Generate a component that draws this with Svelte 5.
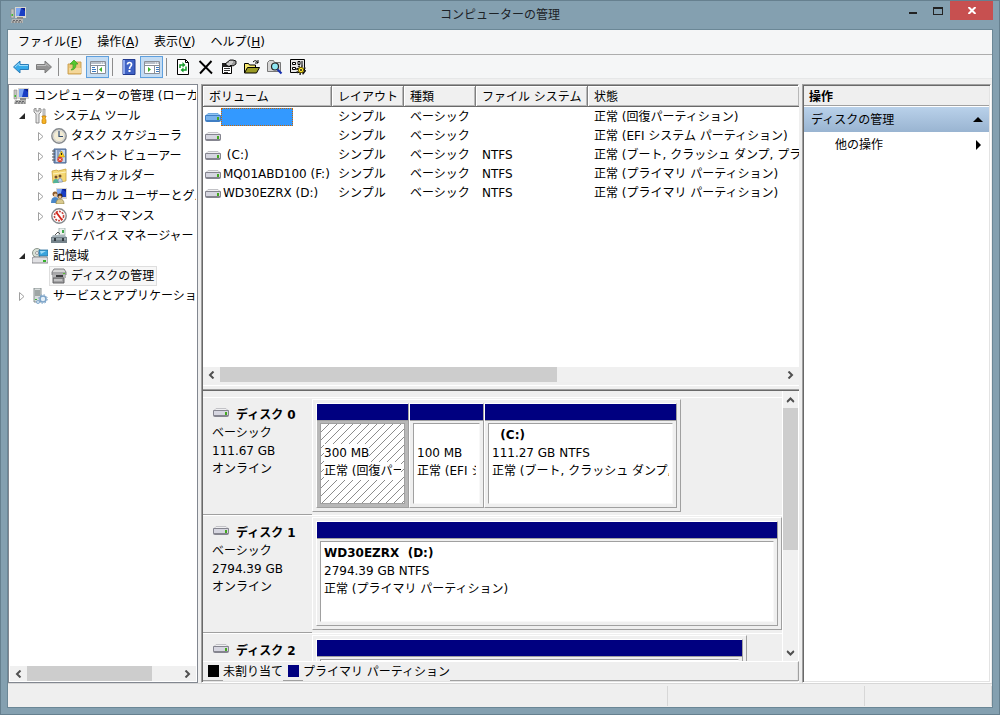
<script lang="ts">
    interface TreeNode {
        label: string;
        icon: string;
        level: number;
        state?: "open" | "closed";
        selected?: boolean;
    }

    interface Partition {
        name?: string;
        size: string;
        status: string;
        width: number;
        selected?: boolean;
    }

    const menus = [
        { label: "ファイル", key: "F" },
        { label: "操作", key: "A" },
        { label: "表示", key: "V" },
        { label: "ヘルプ", key: "H" }
    ];

    const tools = [
        [
            { icon: "back", label: "戻る" },
            { icon: "forward", label: "進む" }
        ],
        [
            { icon: "up", label: "上へ" },
            { icon: "treepane", label: "コンソール ツリー", on: true }
        ],
        [
            { icon: "help", label: "ヘルプ" },
            { icon: "actionpane", label: "操作ウィンドウ", on: true }
        ],
        [
            { icon: "refresh", label: "最新の情報に更新" },
            { icon: "delete", label: "削除" },
            { icon: "props", label: "プロパティ" },
            { icon: "open", label: "開く" },
            { icon: "find", label: "検索" },
            { icon: "settings", label: "設定" }
        ]
    ];

    const tree: TreeNode[] = [
        { label: "コンピューターの管理 (ローカル)", icon: "computer", level: 0 },
        { label: "システム ツール", icon: "tools", level: 1, state: "open" },
        { label: "タスク スケジューラ", icon: "clock", level: 2, state: "closed" },
        { label: "イベント ビューアー", icon: "event", level: 2, state: "closed" },
        { label: "共有フォルダー", icon: "share", level: 2, state: "closed" },
        { label: "ローカル ユーザーとグループ", icon: "users", level: 2, state: "closed" },
        { label: "パフォーマンス", icon: "perf", level: 2, state: "closed" },
        { label: "デバイス マネージャー", icon: "device", level: 2 },
        { label: "記憶域", icon: "storage", level: 1, state: "open" },
        { label: "ディスクの管理", icon: "disks", level: 2, selected: true },
        { label: "サービスとアプリケーション", icon: "services", level: 1, state: "closed" }
    ];

    const volumes = [
        { name: "", fs: "", status: "正常 (回復パーティション)" },
        { name: "", fs: "", status: "正常 (EFI システム パーティション)" },
        { name: " (C:)", fs: "NTFS", status: "正常 (ブート, クラッシュ ダンプ, プライマリ パーティション)" },
        { name: "MQ01ABD100 (F:)", fs: "NTFS", status: "正常 (プライマリ パーティション)" },
        { name: "WD30EZRX (D:)", fs: "NTFS", status: "正常 (プライマリ パーティション)" }
    ];

    const disks: { name: string; size?: string; partitions: Partition[] }[] = [
        {
            name: "ディスク 0",
            size: "111.67 GB",
            partitions: [
                { size: "300 MB", status: "正常 (回復パーティション)", width: 93, selected: true },
                { size: "100 MB", status: "正常 (EFI システム パーティション)", width: 75 },
                { name: "\u00a0 (C:)", size: "111.27 GB NTFS", status: "正常 (ブート, クラッシュ ダンプ, プライマリ パーティション)", width: 193 }
            ]
        },
        {
            name: "ディスク 1",
            size: "2794.39 GB",
            partitions: [
                { name: "WD30EZRX\u00a0 (D:)", size: "2794.39 GB NTFS", status: "正常 (プライマリ パーティション)", width: 462 }
            ]
        },
        {
            name: "ディスク 2",
            partitions: [{ size: "", status: "", width: 427 }]
        }
    ];

    let selectedVolume = $state(0);
</script>

{#snippet screen()}
    <path d="M5 0h11v11H5z" fill="#d9d7cf" />
    <path d="M6 1h9v8H6z" fill="#1a3fc4" />
    <path d="M6 1h5L9 9H6z" fill="#7ea6f2" />
    <path d="M11 1h4v3z" fill="#0b1f90" />
{/snippet}

{#snippet icon(name: string)}
    <svg class="icon" viewBox="0 0 16 16" width="16" height="16" aria-hidden="true">
        {#if name === "computer"}
            {@render screen()}
            <path d="M1 2h3v9H1z" fill="#c4c4c0" stroke="#8b8b88" stroke-width=".6" />
            <path d="M1.500 7h1.500v2h-1.500z" fill="#3fbf30" />
            <path d="M7 10h6v2H7z" fill="#8b8b88" />
            <path d="M2 12h11v4H1z" fill="#b4b4b2" />
            <path d="M3 13.500h9M2 15h10" stroke="#65666a" stroke-dasharray="2 1" />
        {:else if name === "tools"}
            <path d="M2 1v3l2 2v9h3V6l2-2V1L7 0v3H4V0z" fill="#e4e4e4" stroke="#777" stroke-width=".8" />
            <path d="M11 1h2v7h-2z" fill="#ddd" stroke="#888" stroke-width=".7" />
            <path d="M10 8h4v1l-1 1 1 2v3q-2 2-4 0v-3l1-2-1-1z" fill="#f5b324" stroke="#c17d08" stroke-width=".7" />
        {:else if name === "clock"}
            <circle cx="8" cy="8" r="7.200" fill="#f3ecd4" stroke="#85898e" stroke-width="1.400" />
            <circle cx="8" cy="8" r="5.600" fill="none" stroke="#cfd0d2" />
            <path d="M8 3v5.500h4" fill="none" stroke="#314c74" stroke-width="1.200" />
        {:else if name === "event"}
            <path d="M3 1h12v14H3z" fill="#7f9dc4" stroke="#4b6590" />
            <path d="M5 2h9v12H5z" fill="#c8d6ea" />
            <path d="M1 3h3M1 6h3M1 9h3M1 12h3" stroke="#555" />
            <path d="M6 3h4M6 5h2M6 7h2M6 9h2" stroke="#4f6ca0" />
            <path d="M10.500 3l3 6h-6z" fill="#ffd21c" stroke="#b98c00" stroke-width=".6" />
            <path d="M10.500 5v2" stroke="#222" />
            <circle cx="9" cy="11.500" r="2.700" fill="#d83a26" />
            <path d="M8 10.500l2 2m0-2l-2 2" stroke="#fff" />
        {:else if name === "share"}
            <path d="M1 3l5-1 1 1 8-2v12L2 15z" fill="#f4d774" stroke="#c9a33a" stroke-width=".8" />
            <path d="M2 6l13-2" stroke="#fdf2be" />
            <circle cx="5" cy="9" r="1.500" fill="#75502c" />
            <circle cx="9" cy="8" r="1.500" fill="#75502c" />
            <path d="M2 15q0-4 3-4t3 4z" fill="#53b39a" />
            <path d="M7 14q0-4 2-4t2.500 4z" fill="#c7d3e8" stroke="#6f87aa" stroke-width=".6" />
        {:else if name === "users"}
            {@render screen()}
            <circle cx="4" cy="6" r="2.500" fill="#8a5a2b" />
            <circle cx="4.500" cy="7" r="1.600" fill="#f0c79b" />
            <path d="M0 15q0-6 4-6t4 6z" fill="#4a87c8" />
            <circle cx="9" cy="8" r="2.500" fill="#3f2b19" />
            <circle cx="9" cy="9" r="1.600" fill="#e9b989" />
            <path d="M5 16q0-5 4-5t4 5z" fill="#d9c98e" stroke="#85783e" stroke-width=".6" />
        {:else if name === "perf"}
            <circle cx="8" cy="8" r="7.200" fill="#fff" stroke="#85888c" stroke-width="1.400" />
            <circle cx="8" cy="8" r="4.600" fill="none" stroke="#c8473f" stroke-width="1.600" stroke-dasharray="2 1" />
            <path d="M5 4l6 8" stroke="#d3271c" stroke-width="1.800" />
        {:else if name === "device"}
            <path d="M8 0h6v7H8z" fill="#eef3f0" stroke="#9aa" stroke-width=".8" />
            <path d="M11 2h2v3h-2z" fill="#41a94d" />
            <path d="M4 7l3-3 2 2" fill="none" stroke="#555" />
            <path d="M2 7h12l2 3H0z" fill="#a9b6bd" />
            <path d="M0 9h16v6H0z" fill="#75838b" />
            <path d="M1 11h14" stroke="#b9c6cc" />
            <path d="M3 10h2v3H3zM11 10h2v3h-2z" fill="#333c42" />
        {:else if name === "storage"}
            <circle cx="5" cy="5" r="4.500" fill="#d9e2d8" stroke="#8b958c" />
            <circle cx="5" cy="5" r="1.500" fill="#fff" stroke="#9a9a9a" />
            <path d="M7 2h9v6H7z" fill="#3aa4dd" stroke="#2c6f9c" stroke-width=".8" />
            <path d="M8 3h6l-5 3z" fill="#9fdcf8" />
            <path d="M1 9h14l1 2v4H0v-4z" fill="#e0e0e3" stroke="#77777c" stroke-width=".8" />
            <path d="M11 12h3v2h-3z" fill="#35b12a" />
        {:else if name === "disks"}
            <path d="M3 1h10l2 3v3H1V4z" fill="#d6d6d6" stroke="#77777a" stroke-width=".9" />
            <path d="M1 5h14" stroke="#77777a" />
            <path d="M1 7h14v3H1z" fill="#b4b4b6" />
            <path d="M5 7h7v2H5z" fill="#3c3c3e" />
            <path d="M2 10h11v5H2z" fill="#a0a0a2" stroke="#5a5a5c" stroke-width=".9" />
            <path d="M3 12h8" stroke="#e6e6e6" />
            <path d="M12 5h2v1h-2z" fill="#58c22f" />
        {:else if name === "services"}
            <path d="M2 0h7v14H2z" fill="#d7dcdc" stroke="#7d8787" stroke-width=".9" />
            <path d="M3 3h5M3 5h5M3 7h5" stroke="#67716f" />
            <path d="M3 11h2v1H3z" fill="#3daf3a" />
            <circle cx="11" cy="11" r="3" fill="#e4eff8" stroke="#7ba3c8" stroke-width="1.600" />
            <circle cx="11" cy="11" r="4.300" fill="none" stroke="#7ba3c8" stroke-dasharray="1.500 1.900" />
            <circle cx="6" cy="14" r="1.600" fill="#c9dcec" stroke="#7ba3c8" stroke-width=".8" />
        {:else if name === "back"}
            <path d="M.500 8L7 2v3.500h8.500v5H7V14z" fill="#37abea" stroke="#2c7cb8" />
            <path d="M2 8l4-3.500v2h9" fill="none" stroke="#9bdcfb" />
        {:else if name === "forward"}
            <path d="M15.500 8L9 2v3.500H.500v5H9V14z" fill="#939393" stroke="#7c7c7c" />
            <path d="M1 6.500h9v-2l3 3" fill="none" stroke="#c0c0c0" />
        {:else if name === "up"}
            <path d="M1 5h6l1-2h6v12H1z" fill="#eac67a" stroke="#c99b4a" stroke-width=".9" />
            <path d="M2 9h12v5H2z" fill="#f4d79a" />
            <path d="M4 11q3-2 2-6H3l4-4 4 4H9q0 6-5 6z" fill="#55c82e" stroke="#3a9d20" stroke-width=".7" />
        {:else if name === "treepane" || name === "actionpane"}
            <path d="M.500 2.500h15v12H.500z" fill="#fff" stroke="#8a8f98" />
            <path d="M1 3h14v2H1z" fill="#b9c0ca" />
            <path d="M1 6.500h14" stroke="#8a8f98" />
            <path d="M11 4h1M13 4h1" stroke="#fff" />
            {#if name === "treepane"}
                <path d="M7.500 7v7" stroke="#8a8f98" />
                <path d="M2 8.500h3M2 10.500h4M2 12.500h4" stroke="#3a78c0" />
                <path d="M12 8v5L9 10.500z" fill="#3cb128" />
            {:else}
                <path d="M10.500 7v7" stroke="#8a8f98" />
                <path d="M12 8.500h3M12 10.500h3M12 12.500h3" stroke="#3a78c0" />
                <path d="M4 8v5l3-2.500z" fill="#3cb128" />
            {/if}
        {:else if name === "help"}
            <path d="M2 .500h12v15H2z" fill="#3f62c4" stroke="#20398f" />
            <path d="M2 1h2v14H2z" fill="#8ea8ec" />
            <path d="M6.500 5.500q0-2 2-2t2 2q0 1-1 2t-1 2.500" fill="none" stroke="#fff" stroke-width="1.700" />
            <path d="M7.500 11h2v2h-2z" fill="#fff" />
        {:else if name === "refresh"}
            <path d="M2.500.500h8l3 3v12h-11z" fill="#fff" stroke="#000" />
            <path d="M10.500.500v3h3" fill="none" stroke="#000" />
            <path d="M5 9V6h3" fill="none" stroke="#159a2a" stroke-width="1.500" />
            <path d="M7.500 3l3 3-3 2.500z" fill="#159a2a" />
            <path d="M11 7.500V11H8" fill="none" stroke="#159a2a" stroke-width="1.500" />
            <path d="M8.500 8.500v5l-3-2.500z" fill="#159a2a" />
        {:else if name === "delete"}
            <path d="M1.500 2L14 14.500M13.500 2L2 14.500" stroke="#000" stroke-width="1.900" />
        {:else if name === "props"}
            <path d="M1.500 4.500h9v10h-9z" fill="#fff" stroke="#000" />
            <path d="M1 4h10v4H1z" fill="#222" />
            <path d="M3 9.500h6M3 11.500h6M3 13.500h4" stroke="#333" />
            <path d="M4 5l5-4h3l3 1v3l-3 2-2-1-2 2z" fill="#9a9a9a" stroke="#000" stroke-width=".9" />
            <path d="M6 5h5M8 3h4" stroke="#fff" />
        {:else if name === "open"}
            <path d="M.500 14V4.500h4l1 1.500h6v3" fill="#f7e86e" stroke="#000" />
            <path d="M.500 14l3-5.500h12l-3 5.500z" fill="#9a9a24" stroke="#000" />
            <path d="M9 3q3-3 5 1m0-3v3h-3" fill="none" stroke="#000" />
        {:else if name === "find"}
            <path d="M.500 3.500l2-2h4l1 2h6v9h-13z" fill="#d4d4d4" stroke="#777" />
            <circle cx="8" cy="7.500" r="3.500" fill="#8fe7f4" stroke="#222" stroke-width="1.200" />
            <path d="M10.500 10.500l4 4" stroke="#1630b0" stroke-width="2.200" />
        {:else if name === "settings"}
            <path d="M.500.500h14v13H.500z" fill="#e7e7e7" stroke="#000" />
            <path d="M2.500 3.500h3v2h-3zM2.500 8.500h3v2h-3z" fill="#fff" stroke="#000" />
            <path d="M8 2.500h2v3h-2zM12 2v4M7 9.500h2" stroke="#000" fill="#fff" />
            <circle cx="11" cy="11" r="4" fill="none" stroke="#222" stroke-width="2" stroke-dasharray="1.600 1.500" />
            <circle cx="11" cy="11" r="2.700" fill="#ffe82e" stroke="#6b5b00" />
            <circle cx="11" cy="11" r="1" fill="#222" />
        {/if}
    </svg>
{/snippet}

{#snippet driveIcon(tinted: boolean)}
    <svg class="drive" class:tinted viewBox="0 0 16 9" width="16" height="9" aria-hidden="true">
        <path class="lid" d="M3 .500h10l2 2H1z" />
        <path class="shell" d="M1 2h14q1 0 1 1v4q0 2-2 2H2Q0 9 0 7V3q0-1 1-1z" />
        <path class="face" d="M1 3h14v4H1z" />
        <path d="M12 4h2v3h-2z" fill="#43a81f" />
    </svg>
{/snippet}

{#snippet chevron(dir: string)}
    <button class="chevron {dir}" aria-label="スクロール">
        <svg viewBox="0 0 7 8" width="7" height="8" aria-hidden="true">
            <path d="M5.500.500L2 4l3.500 3.500" fill="none" stroke="#505050" stroke-width="2" />
        </svg>
    </button>
{/snippet}

<div class="window">
    <header class="titlebar">
        <div class="app-icon">{@render icon("computer")}</div>
        <h1>コンピューターの管理</h1>
        <div class="controls">
            <button aria-label="最小化"><span class="min"></span></button>
            <button aria-label="最大化"><span class="max"></span></button>
            <button class="close" aria-label="閉じる">
                <svg viewBox="0 0 8 7" width="8" height="7" aria-hidden="true">
                    <path d="M.500 0l7 7M7.500 0l-7 7" stroke="#fff" stroke-width="2" />
                </svg>
            </button>
        </div>
    </header>

    <div class="client">
        <nav class="menubar">
            {#each menus as menu}
                <button>{menu.label}(<u>{menu.key}</u>)</button>
            {/each}
        </nav>

        <div class="toolbar">
            {#each tools as group, i}
                {#if i > 0}
                    <span class="sep"></span>
                {/if}
                {#each group as tool}
                    <button class:on={tool.on} aria-label={tool.label}>
                        {@render icon(tool.icon)}
                    </button>
                {/each}
            {/each}
        </div>

        <main class="body">
            <section class="tree-pane">
                <ul class="tree">
                    {#each tree as node}
                        <li class="level{node.level}">
                            {#if node.level > 0}
                                <span class="expander">
                                    {#if node.state === "open"}
                                        <svg viewBox="0 0 6 6" width="6" height="6"><path d="M6 0v6H0z" fill="#262626" /></svg>
                                    {:else if node.state === "closed"}
                                        <svg viewBox="0 0 6 9" width="6" height="9"><path d="M.500.500l4.500 4-4.500 4z" fill="#fff" stroke="#a0a0a0" /></svg>
                                    {/if}
                                </span>
                            {/if}
                            <span class="node" class:selected={node.selected}>
                                {@render icon(node.icon)}
                                {node.label}
                            </span>
                        </li>
                    {/each}
                </ul>
                <div class="hscroll">
                    {@render chevron("left")}
                    <div class="track"><div class="thumb tree-thumb"></div></div>
                    {@render chevron("right")}
                </div>
            </section>

            <section class="center sunken">
                <div class="volumes">
                    <div class="table-wrap">
                        <table>
                            <colgroup>
                                <col class="c-name" />
                                <col class="c-layout" />
                                <col class="c-type" />
                                <col class="c-fs" />
                                <col />
                            </colgroup>
                            <thead>
                                <tr>
                                    <th>ボリューム</th>
                                    <th>レイアウト</th>
                                    <th>種類</th>
                                    <th>ファイル システム</th>
                                    <th>状態</th>
                                </tr>
                            </thead>
                            <tbody>
                                {#each volumes as volume, i}
                                    <tr onclick={() => (selectedVolume = i)}>
                                        <td class="name">
                                            <div class="name-cell">
                                                {@render driveIcon(selectedVolume === i)}
                                                <span class="vol" class:selected={selectedVolume === i}>{volume.name}</span>
                                            </div>
                                        </td>
                                        <td>シンプル</td>
                                        <td>ベーシック</td>
                                        <td>{volume.fs}</td>
                                        <td>{volume.status}</td>
                                    </tr>
                                {/each}
                            </tbody>
                        </table>
                    </div>
                    <div class="hscroll">
                        {@render chevron("left")}
                        <div class="track"><div class="thumb list-thumb"></div></div>
                        {@render chevron("right")}
                    </div>
                </div>

                <div class="graphic">
                    <div class="disk-area">
                        <div class="disks">
                            {#each disks as disk}
                                <div class="disk">
                                    <div class="disk-label">
                                        <p class="disk-name">{@render driveIcon(false)}<b>{disk.name}</b></p>
                                        {#if disk.size}
                                            <p>ベーシック</p>
                                            <p>{disk.size}</p>
                                            <p>オンライン</p>
                                        {/if}
                                    </div>
                                    <div class="disk-graph">
                                        {#each disk.partitions as part}
                                            <div class="part" class:selected={part.selected} style={`width: ${part.width}px;`}>
                                                <div class="bar"></div>
                                                <div class="part-body">
                                                    <div class="part-info">
                                                        <p><b>{part.name ?? ""}</b></p>
                                                        <p><span>{part.size}</span></p>
                                                        <p><span>{part.status}</span></p>
                                                    </div>
                                                </div>
                                            </div>
                                        {/each}
                                    </div>
                                </div>
                            {/each}
                        </div>
                        <div class="vscroll">
                            {@render chevron("up")}
                            <div class="vtrack"><div class="vthumb"></div></div>
                            {@render chevron("down")}
                        </div>
                    </div>
                    <div class="legend">
                        <span class="swatch unallocated"></span>
                        <span class="legend-text">未割り当て</span>
                        <span class="swatch primary"></span>
                        <span class="legend-text">プライマリ パーティション</span>
                    </div>
                </div>
            </section>

            <aside class="actions sunken">
                <h2>操作</h2>
                <button class="action-head">
                    ディスクの管理
                    <svg viewBox="0 0 10 5" width="10" height="5"><path d="M5 0l5 5H0z" /></svg>
                </button>
                <button class="action">
                    他の操作
                    <svg viewBox="0 0 5 10" width="5" height="10"><path d="M0 0l5 5-5 5z" /></svg>
                </button>
            </aside>
        </main>

        <footer class="status">
            <span></span>
            <span></span>
            <span></span>
        </footer>
    </div>
</div>

<style>
    :global(body) {
        font-family: "DejaVu Sans", "Noto Sans CJK JP", sans-serif;
        font-size: 12px;
        line-height: 18px;
        color: #000;
    }

    p, h1, h2, ul {
        margin: 0;
        padding: 0;
    }

    button {
        border: 0;
        padding: 0;
        background: none;
        font: inherit;
        color: inherit;
    }

    svg {
        display: block;
        flex: none;
    }

    .window {
        height: 100vh;
        min-height: 500px;
        box-sizing: border-box;
        display: flex;
        flex-direction: column;
        background: #84a0b0;
        border: 1px solid #66808f;
    }

    .titlebar {
        height: 28px;
        display: grid;
        grid-template-columns: 1fr auto 1fr;
        align-items: start;
    }
    .app-icon {
        padding: 6px 0 0 9px;
    }
    h1 {
        font-size: 12px;
        font-weight: normal;
        line-height: 29px;
        color: #1c2226;
    }
    .controls {
        display: flex;
        justify-content: flex-end;
        padding-right: 6px;
    }
    .controls button {
        width: 25px;
        height: 19px;
        display: flex;
        justify-content: center;
        align-items: center;
    }
    .controls .close {
        width: 43px;
        background: #c75050;
    }
    .min {
        width: 8px;
        height: 2px;
        margin-top: 4px;
        background: #222;
    }
    .max {
        width: 8px;
        height: 5px;
        border: 1px solid #222;
        border-top-width: 2px;
    }

    .client {
        flex: 1;
        min-height: 0;
        display: flex;
        flex-direction: column;
        margin: 0 6px 6px;
        border: 1px solid #6b8796;
        background: #efefef;
    }

    .menubar {
        height: 24px;
        display: flex;
        gap: 15px;
        padding-left: 10px;
        background: #f5f6f7;
        border-bottom: 1px solid #adadad;
    }

    .toolbar {
        height: 22px;
        display: flex;
        align-items: center;
        padding: 1px 0 0 1px;
        background: #f5f6f7;
        border-bottom: 1px solid #e6e7e8;
    }
    .toolbar button {
        width: 23px;
        height: 22px;
        box-sizing: border-box;
        display: flex;
        align-items: center;
        justify-content: center;
    }
    .toolbar .on {
        background: #c4dcf3;
        border: 1px solid #5fa0de;
    }
    .sep {
        width: 1px;
        height: 18px;
        margin: 0 4px 0 3px;
        background: #8c8c8c;
    }

    .body {
        flex: 1;
        min-height: 0;
        display: grid;
        grid-template-columns: 190px minmax(0, 1fr) 189px;
        gap: 3px;
        padding: 5px 1px 0 0;
    }

    .tree-pane {
        min-height: 0;
        display: flex;
        flex-direction: column;
        padding: 1px;
        border: 1px solid #828790;
        background: #fff;
    }
    .tree {
        flex: 1;
        overflow: hidden;
        list-style: none;
    }
    .tree li {
        height: 20px;
        display: flex;
        align-items: center;
        white-space: nowrap;
    }
    .level0 {
        padding-left: 1px;
    }
    .level1 {
        padding-left: 9px;
    }
    .level2 {
        padding-left: 28px;
    }
    .expander {
        width: 11px;
        flex: none;
    }
    .node {
        display: flex;
        align-items: center;
        gap: 5px;
        padding: 0 2px 0 1px;
        border: 1px solid transparent;
    }
    .level2 .node {
        gap: 4px;
    }
    .node.selected {
        background: #f7f7f7;
        border-color: #dedede;
    }

    .hscroll {
        height: 15px;
        flex: none;
        display: flex;
        background: #f0f0f0;
    }
    .track {
        flex: 1;
    }
    .thumb {
        height: 100%;
        background: #cdcdcd;
    }
    .tree-thumb {
        width: 82%;
    }
    .list-thumb {
        width: 60%;
    }
    .chevron {
        width: 17px;
        height: 15px;
        display: flex;
        align-items: center;
        justify-content: center;
    }
    .chevron.right svg {
        transform: rotate(180deg);
    }
    .chevron.up svg {
        transform: rotate(90deg);
    }
    .chevron.down svg {
        transform: rotate(-90deg);
    }

    .sunken {
        border: 1px solid;
        border-color: #a0a0a0 #fff #fff #a0a0a0;
        box-shadow: inset 1px 1px #696969, inset -1px -1px #e3e3e3;
        padding: 1px;
    }

    .center {
        min-height: 0;
        display: grid;
        grid-template-rows: minmax(0, 303fr) minmax(0, 292fr);
    }
    .volumes {
        min-height: 0;
        box-sizing: border-box;
        display: flex;
        flex-direction: column;
        padding-bottom: 7px;
        background: linear-gradient(#fff, #fff) 0 calc(100% - 3px) / 100% 1px no-repeat #efefef;
    }
    .table-wrap {
        flex: 1;
        min-height: 0;
        overflow: hidden;
        background: #fff;
    }
    table {
        width: 100%;
        table-layout: fixed;
        border-collapse: separate;
        border-spacing: 0;
    }
    .c-name {
        width: 129px;
    }
    .c-layout,
    .c-type {
        width: 72px;
    }
    .c-fs {
        width: 112px;
    }
    th,
    td {
        padding: 0 0 0 6px;
        text-align: left;
        font-weight: normal;
        white-space: nowrap;
        overflow: hidden;
    }
    th {
        height: 18px;
        padding-top: 2px;
        background: #f0f0f0;
        border-bottom: 1px solid #696969;
        border-right: 1px solid #808080;
        box-shadow: inset 1px 1px #fff, inset -1px -1px #b8b8b8;
    }
    th:last-child {
        border-right: 0;
    }
    td {
        height: 18px;
        padding-top: 1px;
    }
    td.name {
        padding-left: 2px;
    }
    .name-cell {
        display: flex;
        align-items: center;
    }
    .vol {
        padding-left: 2px;
        white-space: pre;
    }
    .vol.selected {
        width: 68px;
        height: 16px;
        background: #3399ff;
        border: 1px dotted #cc6600;
    }
    .lid {
        fill: #f0f0f2;
        stroke: #c2c2c6;
    }
    .shell {
        fill: #85858f;
    }
    .face {
        fill: #d6d6e0;
    }
    .tinted .lid {
        fill: #8fc4f4;
        stroke: #6faae2;
    }
    .tinted .shell {
        fill: #3f7ec4;
    }
    .tinted .face {
        fill: #78b2ec;
    }

    .graphic {
        min-height: 0;
        display: flex;
        flex-direction: column;
        border-top: 1px solid #a0a0a0;
        box-shadow: inset 0 1px #696969;
        padding-top: 1px;
    }
    .disk-area {
        flex: 1;
        min-height: 0;
        display: flex;
        padding-right: 1px;
    }
    .disks {
        flex: 1;
        min-width: 0;
        overflow: hidden;
        padding-top: 6px;
    }
    .disk {
        height: 116px;
        display: flex;
        border-top: 1px solid #fff;
        border-bottom: 1px solid transparent;
    }
    .disk-label {
        width: 100px;
        flex: none;
        padding: 8px 0 0 9px;
        margin-bottom: -1px;
        border-bottom: 1px solid #a0a0a0;
    }
    .disk-name {
        display: flex;
        align-items: center;
        gap: 7px;
        padding-left: 1px;
    }
    .disk-name .drive {
        margin-bottom: 6px;
    }
    .disk-graph {
        height: 105px;
        flex: none;
        display: flex;
        margin-top: 1px;
        padding: 3px;
        border: 1px solid;
        border-color: #fff #a0a0a0 #a0a0a0 #fff;
    }
    .part {
        box-sizing: border-box;
        display: flex;
        flex-direction: column;
        border: 1px solid;
        border-color: #fff #a0a0a0 #a0a0a0 #fff;
    }
    .bar {
        height: 16px;
        flex: none;
        background: #000080;
        border-bottom: 1px solid #a0a0a0;
    }
    .part-body {
        flex: 1;
        min-height: 0;
        display: flex;
        padding: 2px 3px 3px;
    }
    .part-info {
        flex: 1;
        min-width: 0;
        padding: 2px 3px 0;
        background: #fff;
        border: 1px solid;
        border-color: #a0a0a0 #f8f8f8 #f8f8f8 #a0a0a0;
    }
    .part-info p {
        height: 18px;
        overflow: hidden;
        white-space: nowrap;
    }
    .part.selected .part-body {
        background: #b8b8b8;
    }
    .part.selected .part-info {
        border-color: #a0a0a0;
        background: linear-gradient(135deg, transparent 45%, #8c8c8c 45%, #8c8c8c 55%, transparent 55%) 0 0 / 8px 8px #fff;
    }
    .part.selected p span {
        display: inline-block;
        background: #fff;
    }

    .vscroll {
        width: 15px;
        flex: none;
        display: flex;
        flex-direction: column;
        border-left: 1px solid #fff;
        background: #f0f0f0;
    }
    .vscroll .chevron {
        width: 15px;
        height: 17px;
    }
    .vtrack {
        flex: 1;
    }
    .vthumb {
        height: 60%;
        background: #cdcdcd;
    }

    .legend {
        height: 18px;
        flex: none;
        display: flex;
        align-items: center;
        padding-left: 5px;
        border-top: 1px solid #fff;
        border-bottom: 1px solid #a0a0a0;
        border-right: 1px solid #a0a0a0;
    }
    .swatch {
        width: 11px;
        height: 12px;
    }
    .unallocated {
        background: #000;
    }
    .primary {
        background: #000080;
    }
    .legend-text {
        height: 18px;
        margin: 0 5px -1px 4px;
        padding-top: 1px;
        background: #efefef;
    }

    .actions {
        background: #fff;
    }
    h2 {
        height: 19px;
        padding-left: 5px;
        font-size: 12px;
        line-height: 22px;
        background: #efefef;
        border-bottom: 1px solid #a0a0a0;
    }
    .action-head,
    .action {
        width: 100%;
        height: 25px;
        display: flex;
        align-items: center;
        justify-content: space-between;
    }
    .action-head {
        margin-top: 1px;
        padding: 0 6px 0 7px;
        background: linear-gradient(#b9d1ea, #99b4d1);
    }
    .action {
        padding: 0 8px 0 31px;
    }

    .status {
        height: 23px;
        flex: none;
        display: grid;
        grid-template-columns: 1fr 197px 127px;
        border-top: 1px solid #d7d7d7;
    }
    .status span {
        margin: 2px 0 1px;
        border-right: 1px solid #d7d7d7;
    }
</style>
